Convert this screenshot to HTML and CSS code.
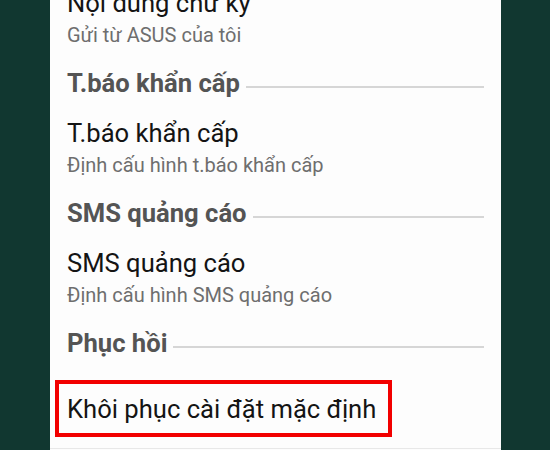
FILE: index.html
```html
<!DOCTYPE html>
<html lang="vi">
<head>
    <meta charset="UTF-8">
    <meta name="viewport" content="width=device-width, initial-scale=1.0">
    <title>Cài đặt tin nhắn</title>
    <link rel="stylesheet" href="styles.css">
</head>
<body>
    <div class="panel">
        <div class="list">
            <div class="item">
                <div class="title">Nội dung chữ ký</div>
                <div class="summary">Gửi từ ASUS của tôi</div>
            </div>

            <div class="category">
                <span class="category-name">T.báo khẩn cấp</span>
                <span class="category-line"></span>
            </div>
            <div class="item">
                <div class="title">T.báo khẩn cấp</div>
                <div class="summary">Định cấu hình t.báo khẩn cấp</div>
            </div>

            <div class="category">
                <span class="category-name">SMS quảng cáo</span>
                <span class="category-line"></span>
            </div>
            <div class="item">
                <div class="title">SMS quảng cáo</div>
                <div class="summary">Định cấu hình SMS quảng cáo</div>
            </div>

            <div class="category">
                <span class="category-name">Phục hồi</span>
                <span class="category-line"></span>
            </div>
            <div class="item item-last">
                <div class="highlight">
                    <div class="title">Khôi phục cài đặt mặc định</div>
                </div>
            </div>
        </div>
    </div>
</body>
</html>
```

FILE: styles.css
```css
:root {
    --frame-color: #113730;
    --panel-color: #fdfdfd;
    --title-color: #141414;
    --summary-color: #6e6e6e;
    --category-color: #545454;
    --line-color: #d6d6d6;
    --mark-color: #f20000;
}
html, body {
    height: 100%;
}
body {
    margin: 0;
    background-color: var(--frame-color);
    font-family: Roboto, 'Noto Sans', sans-serif;
    overflow: hidden;
}
.panel {
    margin: 0 49px 0 50px;
    height: 100%;
    background-color: var(--panel-color);
    overflow: hidden;
}
.list {
    margin-top: -31px;
}
.item {
    padding: 18px 0 16px 17px;
}
.title {
    font-size: 25.6px;
    line-height: 32px;
    color: var(--title-color);
}
.summary {
    font-size: 20px;
    line-height: 32px;
    color: var(--summary-color);
}
.category {
    display: flex;
    align-items: flex-end;
    padding-left: 17px;
    padding-right: 17px;
}
.category-name {
    font-size: 25.6px;
    font-weight: bold;
    line-height: 32px;
    color: var(--category-color);
    white-space: nowrap;
}
.category-line {
    flex: 1;
    height: 2px;
    margin: 0 0 11px 6px;
    background-color: var(--line-color);
}
.item-last {
    padding: 21px 0 11px 5px;
    border-bottom: 1px solid #e8e8e8;
}
.highlight {
    display: inline-block;
    border: 4px solid var(--mark-color);
    padding: 9px 12px 8px 8px;
}
```
